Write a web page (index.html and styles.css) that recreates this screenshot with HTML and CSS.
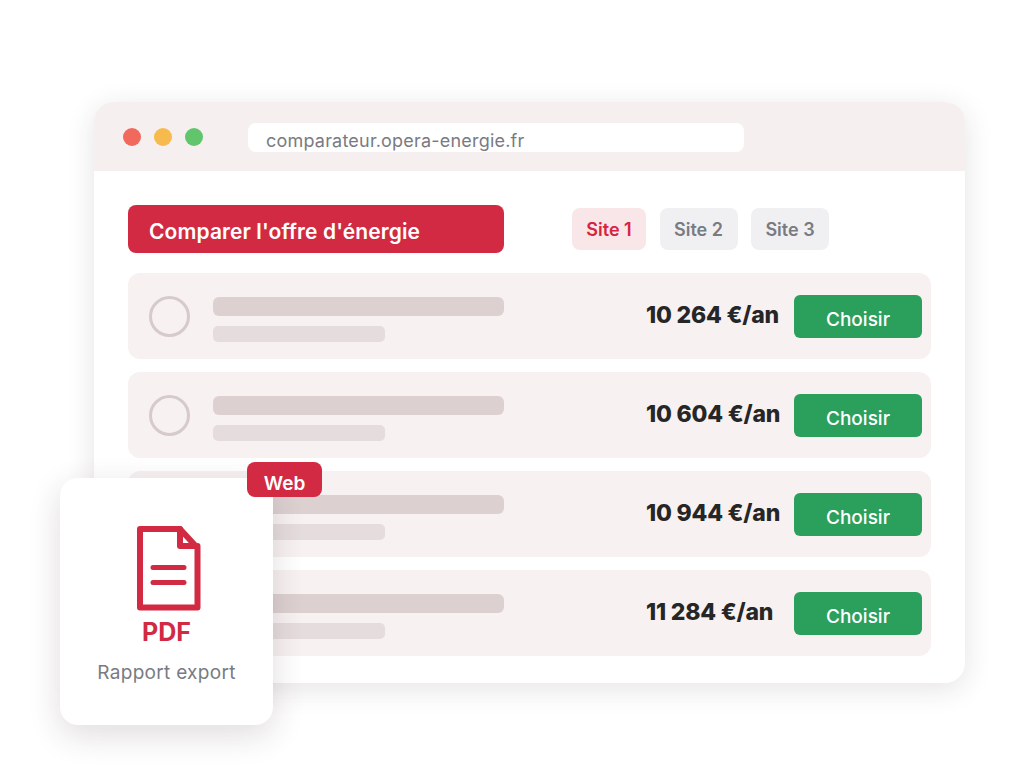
FILE: index.html
```html
<!DOCTYPE html>
<html lang="fr">
<head>
    <meta charset="UTF-8">
    <meta name="viewport" content="width=device-width, initial-scale=1.0">
    <title>Comparateur Opera Energie</title>
    <link rel="stylesheet" href="styles.css">
</head>

<body>
    <div class="scene">
        <!-- Browser window -->
        <div class="window">
            <div class="window-bar">
                <div class="dots">
                    <span class="dot dot-red"></span>
                    <span class="dot dot-yellow"></span>
                    <span class="dot dot-green"></span>
                </div>
                <div class="address">comparateur.opera-energie.fr</div>
            </div>

            <div class="window-body">
                <div class="toolbar">
                    <div class="title">Comparer l'offre d'énergie</div>
                    <div class="tabs">
                        <span class="tab tab-active">Site 1</span>
                        <span class="tab">Site 2</span>
                        <span class="tab">Site 3</span>
                    </div>
                </div>

                <div class="offer">
                    <span class="radio"></span>
                    <div class="bars"><span class="bar-long"></span><span class="bar-short"></span></div>
                    <span class="price">10 264 €/an</span>
                    <span class="choose">Choisir</span>
                </div>
                <div class="offer">
                    <span class="radio"></span>
                    <div class="bars"><span class="bar-long"></span><span class="bar-short"></span></div>
                    <span class="price">10 604 €/an</span>
                    <span class="choose">Choisir</span>
                </div>
                <div class="offer">
                    <span class="radio"></span>
                    <div class="bars"><span class="bar-long"></span><span class="bar-short"></span></div>
                    <span class="price">10 944 €/an</span>
                    <span class="choose">Choisir</span>
                </div>
                <div class="offer">
                    <span class="radio"></span>
                    <div class="bars"><span class="bar-long"></span><span class="bar-short"></span></div>
                    <span class="price">11 284 €/an</span>
                    <span class="choose">Choisir</span>
                </div>
            </div>
        </div>

        <!-- Export card over the window -->
        <div class="export-card">
            <span class="web-badge">Web</span>
            <svg class="pdf-icon" width="64" height="85" viewBox="0 0 64 85" fill="none" stroke="#d22a42" stroke-width="6" stroke-linejoin="round" stroke-linecap="round">
                <path d="M3 3H43L60.500 22V81.500H3Z"/>
                <path d="M43 3V20H60.500" stroke-width="6"/>
                <path d="M16 41.500H47M16 56.500H47" stroke-width="5"/>
            </svg>
            <div class="pdf-label">PDF</div>
            <div class="pdf-caption">Rapport export</div>
        </div>
    </div>
</body>
</html>
```

FILE: styles.css
```css
body {
    background-color: #fff;
    font-family: Inter, "Liberation Sans", sans-serif;
    margin: 0;
    padding: 0;
}

.scene {
    position: relative;
    height: 768px;
    padding: 102px 59px 0 94px;
    box-sizing: border-box;
    overflow: hidden;
}

.window {
    height: 581px;
    background-color: #fff;
    border-radius: 20px;
    box-shadow: 0 6px 28px rgba(60, 40, 45, 0.13);
    overflow: hidden;
}

.window-bar {
    display: flex;
    align-items: center;
    height: 69px;
    padding-left: 29px;
    background-color: #f5efef;
}

.dots {
    display: flex;
    gap: 13px;
    width: 125px;
    margin-top: 1px;
}

.dot {
    width: 18px;
    height: 18px;
    border-radius: 50%;
}

.dot-red {
    background-color: #f0695c;
}

.dot-yellow {
    background-color: #f6bb4c;
}

.dot-green {
    background-color: #61c56c;
}

.address {
    width: 496px;
    height: 29px;
    line-height: 35px;
    margin-top: 2px;
    padding-left: 18px;
    box-sizing: border-box;
    background-color: #fff;
    border-radius: 8px;
    color: #797b82;
    font-size: 18px;
    letter-spacing: 0.2px;
}

.window-body {
    padding: 34px 34px 0;
}

.toolbar {
    display: flex;
    align-items: center;
    margin-bottom: 20px;
}

.title {
    width: 376px;
    height: 48px;
    line-height: 53px;
    padding-left: 21px;
    box-sizing: border-box;
    background-color: #d22a42;
    border-radius: 8px;
    color: #fff;
    font-size: 21px;
    font-weight: 600;
    letter-spacing: 0.1px;
}

.tabs {
    display: flex;
    gap: 13.5px;
    margin-left: 68px;
}

.tab {
    width: 78px;
    height: 42px;
    line-height: 43px;
    text-align: center;
    background-color: #f0f0f2;
    border-radius: 8px;
    color: #797b82;
    font-size: 18px;
    font-weight: 600;
}

.tab-active {
    width: 74px;
    background-color: #f8e6e8;
    color: #d8233f;
}

.offer {
    display: flex;
    align-items: center;
    height: 86px;
    margin-bottom: 13px;
    padding: 0 9px 0 21px;
    box-sizing: border-box;
    background-color: #f7f1f1;
    border-radius: 12px;
}

.radio {
    width: 41px;
    height: 41px;
    margin-top: 1px;
    border: 3.5px solid #d6cacc;
    border-radius: 50%;
    box-sizing: border-box;
}

.bars {
    display: flex;
    flex-direction: column;
    gap: 10px;
    width: 291px;
    margin-left: 23px;
    margin-top: 7px;
}

.bar-long {
    height: 19px;
    background-color: #dcd0d1;
    border-radius: 6px;
}

.bar-short {
    width: 172px;
    height: 16px;
    background-color: #e5dcdd;
    border-radius: 5px;
}

.price {
    margin-left: auto;
    margin-right: 15px;
    margin-top: -3px;
    width: 133px;
    color: #262626;
    font-size: 23px;
    font-weight: 800;
    letter-spacing: -0.2px;
    white-space: nowrap;
}

.choose {
    width: 128px;
    height: 43px;
    line-height: 50px;
    text-align: center;
    background-color: #2ba05c;
    border-radius: 6px;
    color: #fff;
    font-size: 19px;
    font-weight: 500;
}

.export-card {
    position: absolute;
    left: 60px;
    top: 478px;
    display: flex;
    flex-direction: column;
    align-items: center;
    width: 213px;
    height: 247px;
    padding-top: 48px;
    box-sizing: border-box;
    background-color: #fff;
    border-radius: 18px;
    box-shadow: 0 10px 32px rgba(60, 40, 45, 0.16);
}

.web-badge {
    position: absolute;
    left: 187px;
    top: -16px;
    width: 75px;
    height: 35px;
    line-height: 43px;
    text-align: center;
    background-color: #d22a42;
    border-radius: 8px;
    color: #fff;
    font-size: 19px;
    font-weight: 600;
}

.pdf-icon {
    display: block;
    margin-left: 4px;
}

.pdf-label {
    margin-top: 6px;
    color: #d22a42;
    font-size: 25px;
    font-weight: 700;
    line-height: 30px;
}

.pdf-caption {
    margin-top: 14px;
    color: #797b82;
    font-size: 19px;
    letter-spacing: 0.3px;
    line-height: 24px;
}
```
